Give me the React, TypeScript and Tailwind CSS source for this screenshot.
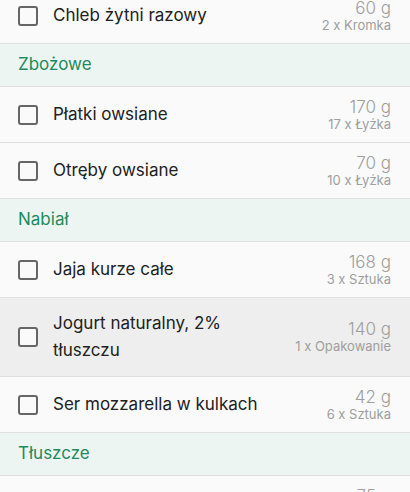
import React from "react";

type Item = { name: string; grams: string; unit: string; active?: boolean };
type Row = { kind: "item"; item: Item } | { kind: "header"; title: string };

const rows: Row[] = [
  { kind: "item", item: { name: "Chleb żytni razowy", grams: "60 g", unit: "2 x Kromka" } },
  { kind: "header", title: "Zbożowe" },
  { kind: "item", item: { name: "Płatki owsiane", grams: "170 g", unit: "17 x Łyżka" } },
  { kind: "item", item: { name: "Otręby owsiane", grams: "70 g", unit: "10 x Łyżka" } },
  { kind: "header", title: "Nabiał" },
  { kind: "item", item: { name: "Jaja kurze całe", grams: "168 g", unit: "3 x Sztuka" } },
  { kind: "item", item: { name: "Jogurt naturalny, 2% tłuszczu", grams: "140 g", unit: "1 x Opakowanie", active: true } },
  { kind: "item", item: { name: "Ser mozzarella w kulkach", grams: "42 g", unit: "6 x Sztuka" } },
  { kind: "header", title: "Tłuszcze" },
  { kind: "item", item: { name: "Oliwa z oliwek", grams: "75 g", unit: "5 x Łyżka" } },
];

function ItemRow({ item }: { item: Item }) {
  return (
    <div className={`flex items-center min-h-[56px] pl-[18px] pr-[19px] py-3 border-b border-[#e0e0e0] ${item.active ? "bg-[#eeeeee]" : "bg-[#fafafa]"}`}>
      <div className="w-5 h-5 shrink-0 rounded-[3px] border-2 border-[#666666] bg-[#fafafa]" />
      <div className="flex-1 pl-[15px] pr-4 text-[17px] leading-[27px] text-[#212121]">{item.name}</div>
      <div className="flex flex-col items-end shrink-0 text-[#9e9e9e] -my-3">
        <span className="text-[17px] leading-[19px] font-light">{item.grams}</span>
        <span className="text-[13px] leading-[15px]">{item.unit}</span>
      </div>
    </div>
  );
}

export default function App() {
  return (
    <div className="w-[410px] h-[492px] overflow-hidden bg-[#fafafa]" style={{ fontFamily: "Inter, 'Noto Sans', sans-serif" }}>
      <div className="-mt-[12px]">
        {rows.map((r, i) =>
          r.kind === "header" ? (
            <div key={i} className="h-[43px] flex items-center px-[18px] bg-[#edf5f2] border-b border-[#e0e0e0] text-[17px] text-[#1e8a5e]">
              {r.title}
            </div>
          ) : (
            <ItemRow key={i} item={r.item} />
          )
        )}
      </div>
    </div>
  );
}
